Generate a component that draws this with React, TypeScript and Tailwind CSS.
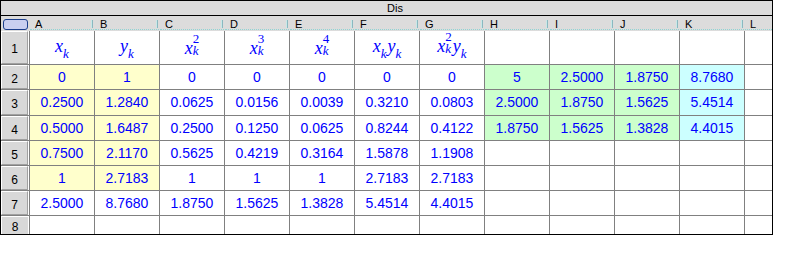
import React from "react";

type Cell = { v: string; bg?: string };
const Y = "bg-[#ffffcc]";
const G = "bg-[#ccffcc]";
const C = "bg-[#ccffff]";

const cols = ["A", "B", "C", "D", "E", "F", "G", "H", "I", "J", "K"];

const mk = (vals: string[], extra: Cell[] = []): Cell[] => {
  const r: Cell[] = vals.map((v, i) => ({ v, bg: i < 2 ? Y : undefined }));
  while (r.length < 7) r.push({ v: "" });
  extra.forEach((e) => r.push(e));
  while (r.length < 11) r.push({ v: "" });
  return r;
};

const rows: { h: string; cells: Cell[] }[] = [
  { h: "h-[25px]", cells: mk(["0", "1", "0", "0", "0", "0", "0"], [{ v: "5", bg: G }, { v: "2.5000", bg: G }, { v: "1.8750", bg: G }, { v: "8.7680", bg: C }]) },
  { h: "h-[26px]", cells: mk(["0.2500", "1.2840", "0.0625", "0.0156", "0.0039", "0.3210", "0.0803"], [{ v: "2.5000", bg: G }, { v: "1.8750", bg: G }, { v: "1.5625", bg: G }, { v: "5.4514", bg: C }]) },
  { h: "h-[25px]", cells: mk(["0.5000", "1.6487", "0.2500", "0.1250", "0.0625", "0.8244", "0.4122"], [{ v: "1.8750", bg: G }, { v: "1.5625", bg: G }, { v: "1.3828", bg: G }, { v: "4.4015", bg: C }]) },
  { h: "h-[25px]", cells: mk(["0.7500", "2.1170", "0.5625", "0.4219", "0.3164", "1.5878", "1.1908"]) },
  { h: "h-[25px]", cells: mk(["1", "2.7183", "1", "1", "1", "2.7183", "2.7183"]) },
  { h: "h-[25px]", cells: mk(["2.5000", "8.7680", "1.8750", "1.5625", "1.3828", "5.4514", "4.4015"]).map((c) => ({ v: c.v })) },
];

function Var({ n, sup }: { n: string; sup?: string }) {
  return (
    <span className="inline-flex items-start">
      <span className="italic">{n}</span>
      <span className="inline-flex flex-col items-start text-[13px] italic">
        <span className={sup ? "h-[10px] leading-[10px] -mt-[5px] not-italic" : "h-[10px]"}>{sup ?? ""}</span>
        <span className="h-[10px] leading-[10px] mt-[2px]">k</span>
      </span>
    </span>
  );
}

const heads: React.ReactNode[] = [
  <Var n="x" />,
  <Var n="y" />,
  <Var n="x" sup="2" />,
  <Var n="x" sup="3" />,
  <Var n="x" sup="4" />,
  <span className="inline-flex"><Var n="x" /><span className="ml-[1px]"><Var n="y" /></span></span>,
  <span className="inline-flex"><Var n="x" sup="2" /><span className="ml-[1px]"><Var n="y" /></span></span>,
];

function RowHead({ n, h }: { n: number; h: string }) {
  return (
    <div className={`w-[29px] ${h} shrink-0 border-r border-b border-[#808080] bg-white flex`}>
      <div className="flex-1 mr-[1px] bg-[#d8d8d8] border-t border-l border-white border-b border-r border-b-[#a0a0a0] border-r-[#a0a0a0] flex items-center justify-center text-[12px] text-black pt-[3px]">
        {n}
      </div>
    </div>
  );
}

export default function App() {
  return (
    <div className="w-[793px] h-[255px] bg-white" style={{ fontFamily: '"Liberation Sans", Arial, sans-serif' }}>
      <div className="w-[773px] border border-black flex flex-col">
        <div className="h-[15px] border-b border-black bg-[#dcdcdc] flex items-center justify-center pl-[17px] text-[11px] text-black leading-none">
          Dis
        </div>
        {/* column headers */}
        <div className="h-[15px] flex bg-[#dcdcdc]">
          <div className="w-[29px] shrink-0 flex items-center justify-center">
            <div className="w-[25px] h-[11px] rounded-[3px] border border-[#1c3f8c] bg-[#c9cff0] mt-[1px]" />
          </div>
          {cols.map((c) => (
            <div key={c} className="w-[65px] shrink-0 relative">
              <div className="absolute left-0 right-[1px] bottom-[1px] border-b border-dotted border-[#8fd4d4]" />
              <span className="absolute left-[5px] top-[3px] text-[11px] leading-none text-black">{c}</span>
              <div className="absolute right-[2px] top-[4px] h-[8px] w-[2px] flex">
                <div className="w-[1px] bg-[#c8e8e8]" />
                <div className="w-[1px] bg-[#8ab8c0]" />
              </div>
            </div>
          ))}
          <div className="w-[27px] shrink-0 relative">
            <div className="absolute left-0 right-0 bottom-[1px] border-b border-dotted border-[#8fd4d4]" />
            <span className="absolute left-[5px] top-[3px] text-[11px] leading-none text-black">L</span>
          </div>
        </div>
        {/* row 1 */}
        <div className="flex h-[34px]">
          <RowHead n={1} h="h-[34px]" />
          {cols.map((c, i) => (
            <div
              key={c}
              className="w-[65px] shrink-0 border-r border-b border-[#808080] flex items-center justify-center text-[#0000ff] text-[18px] leading-none"
              style={{ fontFamily: '"Liberation Serif", "Times New Roman", serif' }}
            >
              {heads[i] ?? null}
            </div>
          ))}
          <div className="w-[27px] shrink-0 border-b border-[#808080]" />
        </div>
        {rows.map((r, ri) => (
          <div key={ri} className={`flex ${r.h}`}>
            <RowHead n={ri + 2} h={r.h} />
            {r.cells.map((c, ci) => (
              <div
                key={ci}
                className={`w-[65px] shrink-0 border-r border-b border-[#808080] flex items-center justify-center text-[14px] text-[#0000ff] ${c.bg ?? "bg-white"}`}
              >
                {c.v}
              </div>
            ))}
            <div className="w-[27px] shrink-0 border-b border-[#808080]" />
          </div>
        ))}
        <div className="flex h-[18px]">
          <div className="w-[29px] h-[18px] shrink-0 border-r border-[#808080] flex">
            <div className="flex-1 mr-[1px] bg-[#d8d8d8] border-t border-l border-white flex items-center justify-center text-[12px] text-black pt-[3px]">8</div>
          </div>
          {cols.map((c) => (
            <div key={c} className="w-[65px] shrink-0 border-r border-[#808080]" />
          ))}
          <div className="w-[27px] shrink-0" />
        </div>
      </div>
    </div>
  );
}
